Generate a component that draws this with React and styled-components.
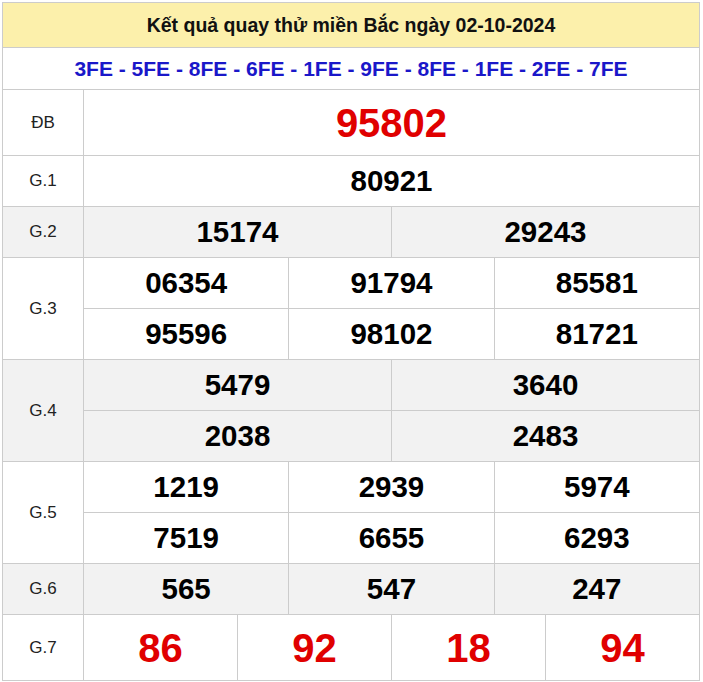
import React from 'react';
import styled, { createGlobalStyle } from 'styled-components';

const GlobalStyle = createGlobalStyle`
  body {
    margin: 0;
    padding: 2px 3px 0 2px;
    background: #fff;
    font-family: "Liberation Sans", Arial, sans-serif;
  }
  td, th { padding: 0; }
`;

const Table = styled.table`
  width: 698px;
  border-collapse: collapse;
  table-layout: fixed;
  border: 1px solid #ccc;
`;

const Title = styled.th`
  height: 44px;
  background: #fcf0ab;
  font-size: 19.5px;
  font-weight: bold;
  color: #111;
  border: 1px solid #ccc;
`;

const Sub = styled.td`
  height: 41px;
  text-align: center;
  font-size: 21px;
  font-weight: bold;
  color: #1a17c9;
  border: 1px solid #ccc;
`;

const Row = styled.tr`
  background: ${(p) => (p.shade ? '#f2f2f2' : '#fff')};
`;

const Label = styled.td`
  text-align: center;
  font-size: 17px;
  color: #222;
  border: 1px solid #ccc;
`;

const Num = styled.td`
  height: ${(p) => (p.big ? 65 : 50)}px;
  text-align: center;
  font-weight: bold;
  font-size: ${(p) => (p.big ? 40 : 29.5)}px;
  line-height: 1;
  color: ${(p) => (p.red ? '#e00000' : '#000')};
  border: 1px solid #ccc;
`;

const prizes = [
  { label: 'ĐB', rows: [['95802']], big: true, red: true },
  { label: 'G.1', rows: [['80921']] },
  { label: 'G.2', rows: [['15174', '29243']], shade: true },
  { label: 'G.3', rows: [['06354', '91794', '85581'], ['95596', '98102', '81721']] },
  { label: 'G.4', rows: [['5479', '3640'], ['2038', '2483']], shade: true },
  { label: 'G.5', rows: [['1219', '2939', '5974'], ['7519', '6655', '6293']] },
  { label: 'G.6', rows: [['565', '547', '247']], shade: true },
  { label: 'G.7', rows: [['86', '92', '18', '94']], big: true, red: true },
];

export default function App() {
  return (
    <>
      <GlobalStyle />
      <Table>
        <colgroup>
          <col style={{ width: 81 }} />
          {Array.from({ length: 12 }).map((_, i) => <col key={i} />)}
        </colgroup>
        <tbody>
          <tr>
            <Title colSpan={13}>Kết quả quay thử miền Bắc ngày 02-10-2024</Title>
          </tr>
          <tr>
            <Sub colSpan={13}>3FE - 5FE - 8FE - 6FE - 1FE - 9FE - 8FE - 1FE - 2FE - 7FE</Sub>
          </tr>
          {prizes.map((p) => p.rows.map((nums, ri) => (
            <Row key={p.label + ri} shade={p.shade}>
              {ri === 0 && <Label rowSpan={p.rows.length}>{p.label}</Label>}
              {nums.map((n, i) => (
                <Num key={i} colSpan={12 / nums.length} big={p.big} red={p.red}>{n}</Num>
              ))}
            </Row>
          )))}
        </tbody>
      </Table>
    </>
  );
}
